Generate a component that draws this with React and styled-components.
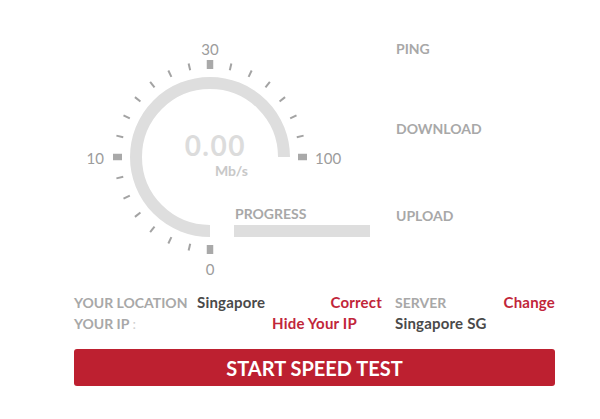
import React from "react";
import styled, { createGlobalStyle } from "styled-components";

const GlobalStyle = createGlobalStyle`
  body {
    margin: 0;
    background: #fff;
    font-family: Lato, "Open Sans", "Liberation Sans", sans-serif;
  }
`;

const CX = 136;
const CY = 127;
const TICKS = 21;

const tickLine = (i) => {
  const major = i % 7 === 0;
  const a = ((90 + (i * 270) / TICKS) * Math.PI) / 180;
  const r1 = major ? 88 : 89;
  const r2 = major ? 97 : 96;
  return {
    major,
    x1: CX + r1 * Math.cos(a),
    y1: CY + r1 * Math.sin(a),
    x2: CX + r2 * Math.cos(a),
    y2: CY + r2 * Math.sin(a),
  };
};

const Gauge = () => (
  <svg width="321" height="250" viewBox="0 0 321 250">
    <path
      d={`M ${CX} ${CY + 74} A 74 74 0 1 1 ${CX + 74} ${CY}`}
      fill="none"
      stroke="#dedede"
      strokeWidth="12"
    />
    {Array.from({ length: TICKS + 1 }, (_, i) => {
      const t = tickLine(i);
      return (
        <line
          key={i}
          x1={t.x1}
          y1={t.y1}
          x2={t.x2}
          y2={t.y2}
          stroke={t.major ? "#a9a9a9" : "#a3a3a3"}
          strokeWidth={t.major ? 6.5 : 2}
        />
      );
    })}
    <TickLabel x={CX} y={19} textAnchor="middle">30</TickLabel>
    <TickLabel x={CX} y={239} textAnchor="middle">0</TickLabel>
    <TickLabel x={30} y={128} textAnchor="end">10</TickLabel>
    <TickLabel x={241} y={128} textAnchor="start">100</TickLabel>
  </svg>
);

export default function App() {
  return (
    <Page>
      <GlobalStyle />
      <Top>
        <GaugePanel>
          <Gauge />
          <Readout>
            <Speed>0.00</Speed>
            <Unit>Mb/s</Unit>
          </Readout>
          <Progress>
            <ProgressLabel>PROGRESS</ProgressLabel>
            <ProgressBar />
          </Progress>
        </GaugePanel>
        <Stats>
          <Stat $h={80}>PING</Stat>
          <Stat $h={87}>DOWNLOAD</Stat>
          <Stat $h={60}>UPLOAD</Stat>
        </Stats>
      </Top>
      <Info>
        <Cell>
          <Label $w={123}>YOUR LOCATION</Label>
          <Value>Singapore</Value>
          <Link>Correct</Link>
        </Cell>
        <Cell>
          <Label>SERVER</Label>
          <Link>Change</Link>
        </Cell>
        <Cell>
          <Label $w={123}>
            YOUR IP <Colon>:</Colon>
          </Label>
          <Link $pad={25}>Hide Your IP</Link>
        </Cell>
        <Cell>
          <Value>Singapore SG</Value>
        </Cell>
      </Info>
      <StartButton>START SPEED TEST</StartButton>
    </Page>
  );
}

const Page = styled.div`
  width: 481px;
  padding: 30px 0 0 74px;
`;

const Top = styled.div`
  display: flex;
  height: 250px;
`;

const GaugePanel = styled.div`
  position: relative;
  width: 321px;
  flex: none;
  svg {
    display: block;
  }
`;

const TickLabel = styled.text`
  font-family: Lato, "Open Sans", sans-serif;
  font-size: 15px;
  fill: #9c9c9c;
  dominant-baseline: central;
`;

const Readout = styled.div`
  position: absolute;
  right: 147px;
  top: 98px;
  display: flex;
  flex-direction: column;
  align-items: flex-end;
`;

const Speed = styled.div`
  font-size: 28px;
  font-weight: 700;
  letter-spacing: 1.5px;
  color: #dcdcdc;
  line-height: 34px;
  margin-right: 2px;
`;

const Unit = styled.div`
  font-size: 14px;
  font-weight: 700;
  color: #c8c8c8;
  line-height: 17px;
`;

const Progress = styled.div`
  position: absolute;
  left: 160px;
  top: 175px;
`;

const ProgressLabel = styled.div`
  font-size: 14px;
  font-weight: 700;
  color: #a8a8a8;
  line-height: 18px;
  margin-left: 1px;
`;

const ProgressBar = styled.div`
  width: 136px;
  height: 12px;
  background: #dedede;
  margin-top: 2px;
`;

const Stats = styled.div`
  display: flex;
  flex-direction: column;
  padding-left: 1px;
  padding-top: 10px;
`;

const Stat = styled.div`
  height: ${(p) => p.$h}px;
  font-size: 14px;
  font-weight: 700;
  color: #a8a8a8;
  line-height: 18px;
`;

const Info = styled.div`
  display: grid;
  grid-template-columns: 308px 160px;
  column-gap: 13px;
  margin-top: 12px;
  font-size: 14px;
  font-weight: 700;
  line-height: 21px;
`;

const Cell = styled.div`
  display: flex;
  align-items: baseline;
  white-space: nowrap;
`;

const Label = styled.span`
  color: #a8a8a8;
  min-width: ${(p) => p.$w || 0}px;
  flex: none;
`;

const Colon = styled.span`
  color: #d0d0d0;
  font-weight: 400;
`;

const Value = styled.span`
  color: #4a4a4a;
  font-size: 15px;
  letter-spacing: 0.2px;
`;

const Link = styled.span`
  color: #c1263a;
  font-size: 15px;
  letter-spacing: 0.2px;
  margin-left: auto;
  padding-right: ${(p) => p.$pad || 0}px;
  cursor: pointer;
`;

const StartButton = styled.button`
  display: block;
  width: 481px;
  height: 37px;
  margin-top: 15px;
  border: none;
  border-radius: 3px;
  background: #bd2030;
  color: #fff;
  font-family: Lato, "Open Sans", sans-serif;
  font-size: 20px;
  font-weight: 700;
  cursor: pointer;
`;
